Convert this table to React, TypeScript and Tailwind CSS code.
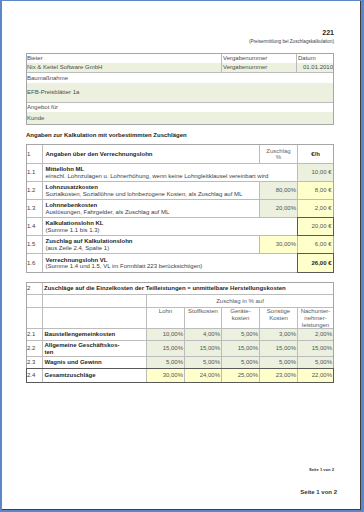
import React from "react";

type R1 = {
  n: string;
  t: string;
  s: string;
  span?: boolean;
  p?: string;
  pY?: boolean;
  v: string;
  vG?: boolean;
  box?: boolean;
  bold?: boolean;
};

const rows1: R1[] = [
  { n: "1.1", t: "Mittellohn ML", s: "einschl. Lohnzulagen u. Lohnerhöhung, wenn keine Lohngleitklausel vereinbart wird", span: true, v: "10,00 €", vG: true },
  { n: "1.2", t: "Lohnzusatzkosten", s: "Sozialkosten, Soziallöhne und lohnbezogene Kosten, als Zuschlag auf ML", p: "80,00%", v: "8,00 €" },
  { n: "1.3", t: "Lohnnebenkosten", s: "Auslösungen, Fahrgelder, als Zuschlag auf ML", p: "20,00%", v: "2,00 €" },
  { n: "1.4", t: "Kalkulationslohn KL", s: "(Summe 1.1 bis 1.3)", span: true, v: "20,00 €", box: true },
  { n: "1.5", t: "Zuschlag auf Kalkulationslohn", s: "(aus Zeile 2.4, Spalte 1)", p: "30,00%", pY: true, v: "6,00 €" },
  { n: "1.6", t: "Verrechnungslohn VL", s: "(Summe 1.4 und 1.5, VL im Formblatt 223 berücksichtigen)", span: true, v: "26,00 €", box: true, bold: true },
];

type R2 = { n: string; t: React.ReactNode; v: string[]; h: string; total?: boolean };

const rows2: R2[] = [
  { n: "2.1", t: "Baustellengemeinkosten", v: ["10,00%", "4,00%", "5,00%", "3,00%", "2,00%"], h: "h-[12px]" },
  { n: "2.2", t: <>Allgemeine Geschäftskos-<br />ten</>, v: ["15,00%", "15,00%", "15,00%", "15,00%", "15,00%"], h: "h-[16px]" },
  { n: "2.3", t: "Wagnis und Gewinn", v: ["5,00%", "5,00%", "5,00%", "5,00%", "5,00%"], h: "h-[12px]" },
  { n: "2.4", t: "Gesamtzuschläge", v: ["30,00%", "24,00%", "25,00%", "23,00%", "22,00%"], h: "h-[13px]", total: true },
];

const colW = ["w-[38px]", "w-[37px]", "w-[38px]", "w-[38px]", "flex-1"];

function HeaderTable() {
  return (
    <div className="mt-[8px] border border-[#a6a6a6] text-[6px] leading-[7px] text-[#4d4d4d]">
      <div className="flex h-[9px]">
        <div className="w-[195px] border-r border-[#bcbcbc] flex items-center">Bieter</div>
        <div className="w-[75px] border-r border-[#bcbcbc] flex items-center pl-px">Vergabenummer</div>
        <div className="flex-1 flex items-center pl-px">Datum</div>
      </div>
      <div className="flex h-[10px] bg-[#ebf1de] border-b border-[#bcbcbc]">
        <div className="w-[195px] border-r border-[#bcbcbc] flex items-center">Nix &amp; Keitel Software GmbH</div>
        <div className="w-[75px] border-r border-[#bcbcbc] flex items-center pl-px">Vergabenummer</div>
        <div className="flex-1 flex items-center justify-end">01.01.2010</div>
      </div>
      <div className="h-[10px] flex items-center">Baumaßnahme</div>
      <div className="h-[20px] flex items-center bg-[#ebf1de] border-b border-[#bcbcbc]">EFB-Preisblätter 1a</div>
      <div className="h-[9px] flex items-center">Angebot für</div>
      <div className="h-[12px] flex items-center bg-[#ebf1de]">Kunde</div>
    </div>
  );
}

function Table1() {
  return (
    <div className="mt-[5px] border border-[#a6a6a6] text-[6px] leading-[6.5px] text-[#404040]">
      <div className="flex h-[19px] border-b border-[#bcbcbc]">
        <div className="w-[16px] border-r border-[#bcbcbc] flex items-center">1</div>
        <div className="w-[217px] border-r border-[#bcbcbc] flex items-center pl-[2.5px] font-bold text-[#262626]">
          Angaben über den Verrechnungslohn
        </div>
        <div className="w-[38px] border-r border-[#bcbcbc] flex items-center justify-center text-center text-[#666]">
          Zuschlag
          <br />%
        </div>
        <div className="flex-1 flex items-center justify-center font-bold text-[#262626]">€/h</div>
      </div>
      {rows1.map((r, i) => (
        <div
          key={r.n}
          className={i < rows1.length - 1 ? "flex h-[18px] border-b border-[#bcbcbc]" : "flex h-[18px]"}
        >
          <div className="w-[16px] border-r border-[#bcbcbc] flex items-center">{r.n}</div>
          <div
            className={
              r.span
                ? "w-[255px] border-r border-[#bcbcbc] flex flex-col justify-center pl-[2.5px]"
                : "w-[217px] border-r border-[#bcbcbc] flex flex-col justify-center pl-[2.5px]"
            }
          >
            <div className="font-bold text-[#262626] whitespace-nowrap">{r.t}</div>
            <div className="whitespace-nowrap">{r.s}</div>
          </div>
          {!r.span && (
            <div
              className={
                r.pY
                  ? "w-[38px] border-r border-[#bcbcbc] bg-[#ffffcc] flex items-center justify-end pr-px text-[#555]"
                  : "w-[38px] border-r border-[#bcbcbc] bg-[#ebf1de] flex items-center justify-end pr-px text-[#555]"
              }
            >
              {r.p}
            </div>
          )}
          <div
            className={
              (r.vG ? "bg-[#ebf1de] " : "bg-[#ffffcc] ") +
              (r.box ? "outline-1 outline-[#595959] " : "") +
              (r.bold ? "font-bold text-[#262626] " : "text-[#555] ") +
              "flex-1 flex items-center justify-end pr-[1.5px]"
            }
          >
            {r.v}
          </div>
        </div>
      ))}
    </div>
  );
}

function Table2() {
  return (
    <div className="mt-[9px] border border-[#a6a6a6] text-[6px] leading-[7px] text-[#404040]">
      <div className="flex h-[12px] border-b border-[#bcbcbc]">
        <div className="w-[16px] border-r border-[#bcbcbc] flex items-center">2</div>
        <div className="flex-1 flex items-center pl-px font-bold text-[#262626] whitespace-nowrap">
          Zuschläge auf die Einzelkosten der Teilleistungen = unmittelbare Herstellungskosten
        </div>
      </div>
      <div className="flex h-[13px] border-b border-[#bcbcbc]">
        <div className="w-[16px] border-r border-[#bcbcbc]" />
        <div className="w-[104px] border-r border-[#bcbcbc]" />
        <div className="flex-1 flex items-center justify-center text-[#595959]">Zuschlag in % auf</div>
      </div>
      <div className="flex h-[21px] border-b border-[#bcbcbc] text-[#595959]">
        <div className="w-[16px] border-r border-[#bcbcbc]" />
        <div className="w-[104px] border-r border-[#bcbcbc]" />
        <div className="w-[38px] border-r border-[#bcbcbc] text-center">Lohn</div>
        <div className="w-[37px] border-r border-[#bcbcbc] text-center">Stoffkosten</div>
        <div className="w-[38px] border-r border-[#bcbcbc] text-center">
          Geräte-
          <br />
          kosten
        </div>
        <div className="w-[38px] border-r border-[#bcbcbc] text-center">
          Sonstige
          <br />
          Kosten
        </div>
        <div className="flex-1 text-center">
          Nachunter-
          <br />
          nehmer-
          <br />
          leistungen
        </div>
      </div>
      {rows2.map((r) => (
        <div
          key={r.n}
          className={
            r.total
              ? "flex " + r.h + " outline-1 outline-[#595959]"
              : "flex " + r.h + " border-b border-[#bcbcbc]"
          }
        >
          <div className="w-[16px] border-r border-[#bcbcbc] flex items-center">{r.n}</div>
          <div className="w-[104px] border-r border-[#bcbcbc] flex items-center pl-[1.5px] font-bold text-[#262626] leading-[6.5px]">
            <div>{r.t}</div>
          </div>
          {r.v.map((v, j) => (
            <div
              key={j}
              className={
                (r.total ? "bg-[#ffffcc] " : "bg-[#ebf1de] ") +
                colW[j] +
                (j < 4 ? " border-r border-[#bcbcbc]" : "") +
                " flex items-center justify-end pr-px text-[#555]"
              }
            >
              {v}
            </div>
          ))}
        </div>
      ))}
    </div>
  );
}

export default function App() {
  return (
    <div className="w-[364px] h-[512px] bg-[#5d87c6] pl-[2px] pt-px pr-[3px] pb-[2px] font-['Liberation_Sans',Arial,Helvetica,sans-serif]">
      <div className="h-full bg-white border-r border-b border-[#3c3c3c] pl-[24px]">
        <div className="w-[308px] flex flex-col">
          <div className="mt-[28px] text-right text-[7px] leading-[8px] font-bold text-[#1f1f1f]">221</div>
          <div className="mt-[2px] text-right text-[4.6px] leading-[6px] text-[#404040]">
            (Preisermittlung bei Zuschlagskalkulation)
          </div>
          <HeaderTable />
          <div className="mt-[6px] text-[6px] leading-[8px] font-bold text-[#262626]">
            Angaben zur Kalkulation mit vorbestimmten Zuschlägen
          </div>
          <Table1 />
          <Table2 />
          <div className="mt-[84px] text-right text-[4.1px] leading-[5px] font-bold text-[#333]">Seite 1 von 2</div>
          <div className="mt-[16px] -mr-[3px] text-right text-[6px] leading-[8px] font-bold text-[#333]">
            Seite 1 von 2
          </div>
        </div>
      </div>
    </div>
  );
}
